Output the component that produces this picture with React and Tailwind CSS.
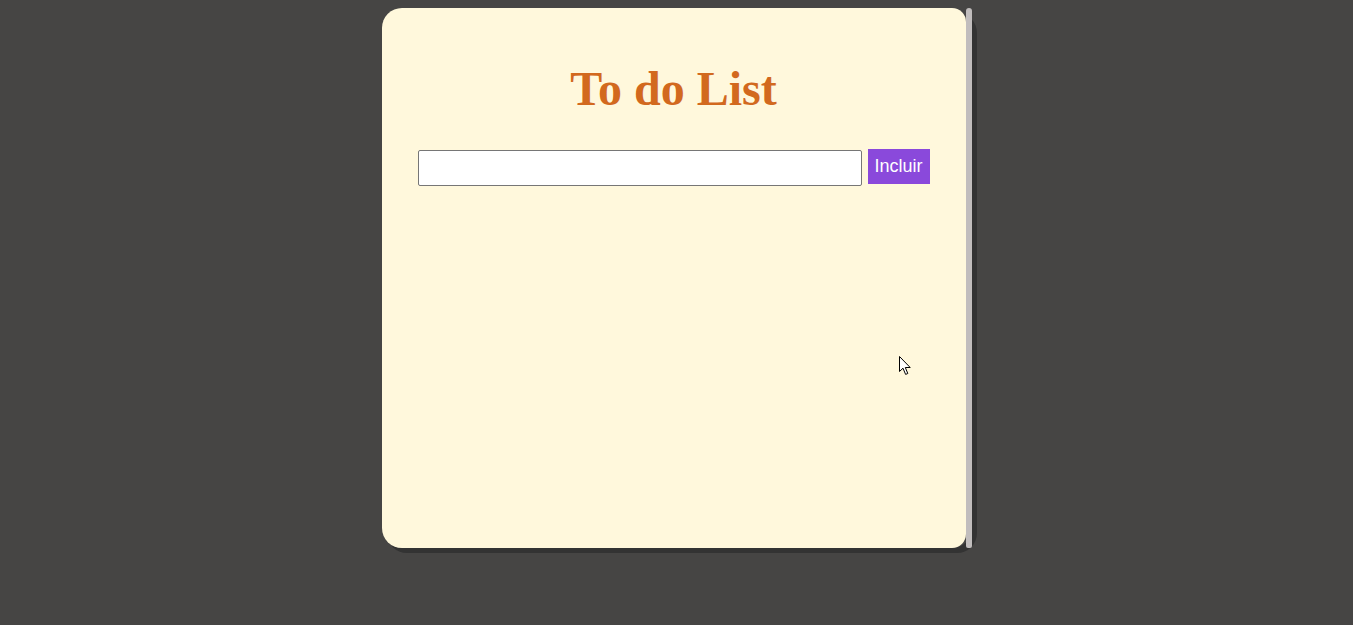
import React, { useState } from "react";

function App() {
  const [task, setTask] = useState("");
  const [tasks, setTasks] = useState([]);

  const addTask = () => {
    if (!task.trim()) return;
    setTasks((prev) => [...prev, task]);
    setTask("");
  };

  return (
    <div className="relative min-h-screen bg-[#464544] flex justify-center pt-2">
      <div className="flex w-[590px] h-[540px] rounded-[20px] shadow-[5px_5px_0_#333]">
        <div className="flex-1 rounded-l-[20px] rounded-r-[14px] bg-[#fff8dc] flex flex-col">
          <h1 className="mt-[53px] text-center text-[48px] leading-[55px] font-bold text-[#d2691e] font-['Liberation_Serif',serif]">
            To do List
          </h1>
          <div className="flex items-start mt-[33px] ml-[36px]">
            <input
              type="text"
              value={task}
              onChange={(e) => setTask(e.target.value)}
              className="mt-px w-[444px] h-[36px] bg-white border border-[#767676] rounded-[2px] px-1 outline-none"
            />
            <button
              onClick={addTask}
              className="ml-[6px] w-[62px] h-[35px] bg-[#8a49db] text-white text-[18px] font-['Liberation_Sans',sans-serif]"
            >
              Incluir
            </button>
          </div>
          <ul className="ml-[36px] mt-4 font-['Liberation_Sans',sans-serif]">
            {tasks.map((t, idx) => (
              <li key={idx}>{t}</li>
            ))}
          </ul>
        </div>
        <div className="w-[6px] h-full bg-[#c1bdbd] rounded-t-[3px] rounded-b-[2px]" />
      </div>

      {/* mouse pointer seen in the screenshot */}
      <svg
        className="absolute left-[899px] top-[356px]"
        width="13"
        height="20"
        viewBox="0 0 13 20"
      >
        <path
          d="M0.5 0.5 L0.5 15.5 L4 12.2 L6.6 18.4 L8.8 17.5 L6.3 11.5 L11.2 11.5 Z"
          fill="#fff"
          stroke="#000"
          strokeWidth="1"
          strokeLinejoin="round"
        />
      </svg>
    </div>
  );
}

export default App;
